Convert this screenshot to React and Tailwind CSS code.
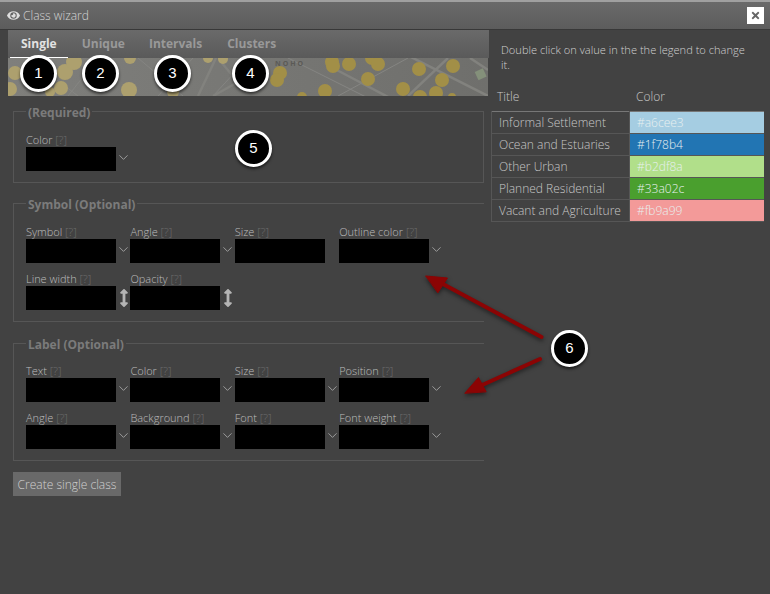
import { ChevronDown } from 'lucide-react';
import { FaEye, FaTimes, FaArrowsAltV } from 'react-icons/fa';

const legend = [
  { title: 'Informal Settlement', color: '#a6cee3', swatch: '#a5cde2' },
  { title: 'Ocean and Estuaries', color: '#1f78b4', swatch: '#2275b3' },
  { title: 'Other Urban', color: '#b2df8a', swatch: '#b1df8a' },
  { title: 'Planned Residential', color: '#33a02c', swatch: '#4a9f2e' },
  { title: 'Vacant and Agriculture', color: '#fb9a99', swatch: '#f39a99' },
];

const symbolRows = [
  [['Symbol', 'select'], ['Angle', 'select'], ['Size', 'none'], ['Outline color', 'select']],
  [['Line width', 'spin'], ['Opacity', 'spin']],
];

const labelRows = [
  [['Text', 'select'], ['Color', 'select'], ['Size', 'select'], ['Position', 'select']],
  [['Angle', 'select'], ['Background', 'select'], ['Font', 'select'], ['Font weight', 'select']],
];

const badges = [
  { n: 1, cls: 'left-[20px] top-[55px]' },
  { n: 2, cls: 'left-[82px] top-[55px]' },
  { n: 3, cls: 'left-[154px] top-[55px]' },
  { n: 4, cls: 'left-[232px] top-[55px]' },
  { n: 5, cls: 'left-[235px] top-[130px]' },
  { n: 6, cls: 'left-[551px] top-[330px]' },
];

const paleDots = [
  [7, 15, 7], [2, 31, 7], [-3, 31, 6], [57, 14, 8], [53, 30, 7], [66, 4, 8],
  [121, 32, 8], [122, 0, 6], [165, 34, 6], [200, 0, 5], [215, 1, 5], [42, 34, 5],
];

const strongDots = [
  [272, 15, 7], [269, 22, 7], [324, 4, 7], [325, 8, 7], [341, 6, 7], [364, 0, 7],
  [370, 6, 7], [360, 21, 7], [317, 33, 7], [294, 39, 5], [411, 11, 7], [395, 31, 7],
  [412, 39, 7], [428, 35, 7], [434, 22, 7], [445, 8, 7], [444, 39, 4],
];

function MapStrip() {
  return (
    <svg width="480" height="38" viewBox="0 0 480 38" className="block">
      <defs>
        <linearGradient id="mapBg" x1="0" x2="1" y1="0" y2="0">
          <stop offset="0" stopColor="#7f7f7c" />
          <stop offset="1" stopColor="#6f6f6c" />
        </linearGradient>
      </defs>
      <rect width="480" height="38" fill="url(#mapBg)" />
      <g stroke="#858582" strokeWidth="1" fill="none">
        <path d="M20 0 L70 38 M90 0 L60 38 M130 0 L175 38 M185 0 L150 38 M240 0 L205 38" />
        <path d="M330 38 L400 0 M280 0 L400 60" />
      </g>
      <g stroke="#82827e" strokeWidth="2.5" fill="none">
        <path d="M208 0 L190 38 M213 4 L230 24 L205 38" />
        <path d="M325 10 L420 60 M395 -5 L480 38 M440 0 L400 38" />
        <path d="M462 0 L480 12" />
      </g>
      <g fill="#ada06e">
        {paleDots.map(([cx, cy, r], i) => <circle key={i} cx={cx} cy={cy} r={r} />)}
      </g>
      <g fill="#a28f47">
        {strongDots.map(([cx, cy, r], i) => <circle key={i} cx={cx} cy={cy} r={r} />)}
      </g>
      <text x="267" y="8" fontSize="7" fontWeight="700" letterSpacing="2" fill="#5b5a56" fontFamily="Open Sans, sans-serif">NOHO</text>
      <rect x="468" y="12" width="9" height="9" fill="#84907a" transform="rotate(-25 472 16)" />
    </svg>
  );
}

function Field({ label, control }) {
  return (
    <div className="w-[104.4px] shrink-0">
      <div className="h-[15px] text-[11px] leading-[15px] font-light whitespace-nowrap text-[#bdbdbd]">
        {label} <span className="text-[#6e6e6e]">[?]</span>
      </div>
      <div className="flex items-center">
        <div className="w-[90px] h-[24px] shrink-0 bg-black" />
        {control === 'select' && <ChevronDown size={15} strokeWidth={1.25} className="mb-[4px] shrink-0 text-[#b5b5b5]" />}
        {control === 'spin' && <FaArrowsAltV size={18} className="-ml-[1px] shrink-0 text-[#b5b5b5]" />}
      </div>
    </div>
  );
}

function Section({ title, rows, className }) {
  return (
    <fieldset className={`border border-[#565656] pl-[12px] ${className}`}>
      <legend className="px-[2px] h-[14px] text-[12px] leading-[18px] font-bold text-[#7b7b7b]">{title}</legend>
      <div className="flex flex-col gap-[8px]">
        {rows.map((row, i) => (
          <div key={i} className="flex">
            {row.map(([label, control]) => <Field key={label} label={label} control={control} />)}
          </div>
        ))}
      </div>
    </fieldset>
  );
}

function Badge({ n, cls }) {
  return (
    <div className={`absolute ${cls} w-[37px] h-[37px] rounded-full bg-black border-[3px] border-white flex items-center justify-center text-[15px] text-white font-['Liberation_Sans',sans-serif] shadow-[0_2px_3px_rgba(0,0,0,0.6)]`}>
      {n}
    </div>
  );
}

export default function App() {
  return (
    <div className="relative w-[770px] h-[594px] overflow-hidden bg-[#424242] font-['Open_Sans',sans-serif]">
      <div className="h-[2px] bg-[#a0a0a0]" />
      <div className="h-[27px] flex items-center justify-between pl-[7px] pr-[6px] bg-gradient-to-b from-[#6a6a6a] to-[#5c5c5c]">
        <div className="flex items-center gap-[3px] text-[12px] font-light text-[#d4d4d4]">
          <FaEye size={13} className="text-[#dedede]" />
          Class wizard
        </div>
        <div className="w-[17px] h-[17px] bg-white flex items-center justify-center">
          <FaTimes size={11} className="text-[#666]" />
        </div>
      </div>
      <div className="h-[1px] bg-[#383838]" />

      <div className="flex">
        <div className="w-[491px] shrink-0">
          <div className="ml-[8px]">
            <div className="h-[28px] w-[481px] flex bg-gradient-to-b from-[#6a6a6a] to-[#5a5a5a] pl-[2px]">
              <div className="px-[11px] pt-[5px] text-[12px] font-bold text-[#e2e2e2] border-b border-white">Single</div>
              <div className="pl-[14px] pr-[10px] pt-[5px] text-[12px] font-bold text-[#999]">Unique</div>
              <div className="pl-[14px] pr-[10px] pt-[5px] text-[12px] font-bold text-[#999]">Intervals</div>
              <div className="pl-[15px] pr-[10px] pt-[5px] text-[12px] font-bold text-[#999]">Clusters</div>
            </div>
            <MapStrip />
          </div>

          <div className="ml-[13px] w-[471px] mt-[8px]">
            <Section title="(Required)" rows={[[['Color', 'select']]]} className="pb-[11px] [&>div]:pt-[14px]" />
            <Section title="Symbol (Optional)" rows={symbolRows} className="mt-[13px] pb-[11px] border-r-0 [&>div]:pt-[14px]" />
            <Section title="Label (Optional)" rows={labelRows} className="mt-[14px] pb-[11px] border-r-0 [&>div]:pt-[13px]" />
            <button className="mt-[11px] w-[108px] h-[24px] pt-[1px] bg-[#696969] text-[12px] font-light text-[#d0d0d0]">Create single class</button>
          </div>
        </div>

        <div className="w-[273px]">
          <p className="ml-[10px] mt-[12px] w-[250px] text-[11.1px] leading-[15px] font-light text-[#d0d0d0]">
            Double click on value in the the legend to change it.
          </p>
          <div className="flex mt-[16px] h-[17px] text-[12px] leading-[17px] font-light text-[#c8c8c8]">
            <div className="w-[145px] pl-[6px]">Title</div>
            <div>Color</div>
          </div>
          <table className="mt-[6px] w-[273px] table-fixed border-collapse border-t border-[#777] text-[12px] font-light text-[#c8c8c8]">
            <tbody>
              {legend.map((row) => (
                <tr key={row.title} className="h-[22px]">
                  <td className="w-[138px] pl-[7px] p-0 whitespace-nowrap border border-t-0 border-[#565656]">{row.title}</td>
                  <td className="p-0 pl-[7px] border-b border-[#565656]" style={{ backgroundColor: row.swatch, color: '#e8f0f0' }}>{row.color}</td>
                </tr>
              ))}
            </tbody>
          </table>
        </div>
      </div>

      <svg width="770" height="594" viewBox="0 0 770 594" className="absolute left-0 top-0 pointer-events-none">
        <g fill="#8b0404" stroke="#8b0404" strokeWidth="4" strokeLinecap="round" className="drop-shadow-[0_2px_2px_rgba(0,0,0,0.5)]">
          <path d="M541.5 337 L441 283" fill="none" />
          <path d="M426 276 L447.5 278 L438 292.5 Z" strokeWidth="1" />
          <path d="M540 359 L480 386" fill="none" />
          <path d="M465 393 L478.5 377.5 L486 391.5 Z" strokeWidth="1" />
        </g>
      </svg>

      {badges.map((b) => <Badge key={b.n} n={b.n} cls={b.cls} />)}
    </div>
  );
}
